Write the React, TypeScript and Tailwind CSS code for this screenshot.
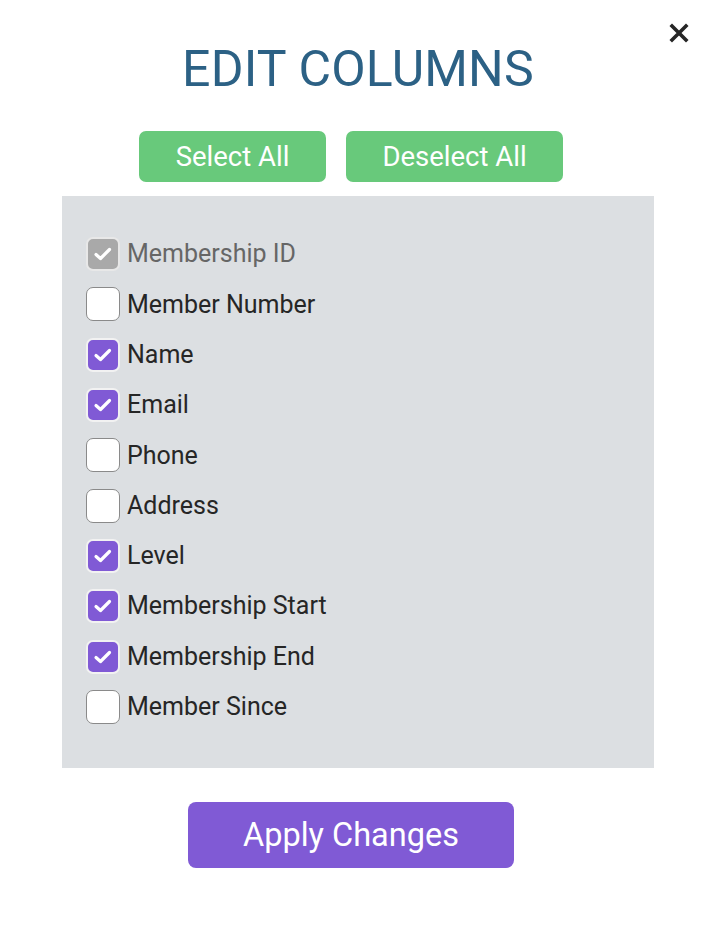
import React from "react";

const columns = [
  { label: "Membership ID", checked: true, disabled: true },
  { label: "Member Number", checked: false },
  { label: "Name", checked: true },
  { label: "Email", checked: true },
  { label: "Phone", checked: false },
  { label: "Address", checked: false },
  { label: "Level", checked: true },
  { label: "Membership Start", checked: true },
  { label: "Membership End", checked: true },
  { label: "Member Since", checked: false },
];

function Check() {
  return (
    <svg width="20" height="20" viewBox="0 0 20 20" fill="none">
      <path d="M3 10.5L7.5 14.5L16.5 5.5" stroke="#fff" strokeWidth="3.2" strokeLinecap="round" strokeLinejoin="round" />
    </svg>
  );
}

export default function App() {
  return (
    <div className="relative w-[716px] h-[926px] bg-white flex flex-col items-center" style={{ fontFamily: "Roboto, 'Liberation Sans', sans-serif" }}>
      {/* Close */}
      <button className="absolute top-[22px] right-[26px] w-[22px] h-[22px] flex items-center justify-center">
        <svg width="20" height="20" viewBox="0 0 20 20" fill="none">
          <path d="M3 3L17 17M17 3L3 17" stroke="#262626" strokeWidth="3.6" strokeLinecap="square" />
        </svg>
      </button>

      <h1 className="mt-[40px] text-[50px] leading-[59px] text-[#2c6185] tracking-[0.2px]">EDIT COLUMNS</h1>

      <div className="mt-[32px] mr-[14px] flex gap-[20px]">
        <button className="w-[187px] h-[51px] rounded-[7px] bg-[#68c97b] text-white text-[27.5px]">Select All</button>
        <button className="w-[217px] h-[51px] rounded-[7px] bg-[#68c97b] text-white text-[27.5px]">Deselect All</button>
      </div>

      <div className="mt-[14px] w-[592px] bg-[#dcdfe2] pt-[33px] pb-[36px] pl-[24px] flex flex-col">
        {columns.map((c) => (
          <label key={c.label} className="h-[50.3px] flex items-center gap-[7px]">
            {c.disabled ? (
              <span className="w-[34px] h-[34px] rounded-[7px] bg-[#a9a9a9] border-2 border-[#e8e8e8] flex items-center justify-center">
                <Check />
              </span>
            ) : c.checked ? (
              <span className="w-[34px] h-[34px] rounded-[7px] bg-[#805ad5] border-2 border-[#f2f2f2] flex items-center justify-center">
                <Check />
              </span>
            ) : (
              <span className="w-[34px] h-[34px] rounded-[7px] bg-white border border-[#8a8a8a]" />
            )}
            <span className={`text-[25px] ${c.disabled ? "text-[#666666]" : "text-[#262626]"}`}>{c.label}</span>
          </label>
        ))}
      </div>

      <button className="mt-[34px] mr-[14px] w-[326px] h-[66px] rounded-[8px] bg-[#805ad5] text-white text-[32.5px]">Apply Changes</button>
    </div>
  );
}
